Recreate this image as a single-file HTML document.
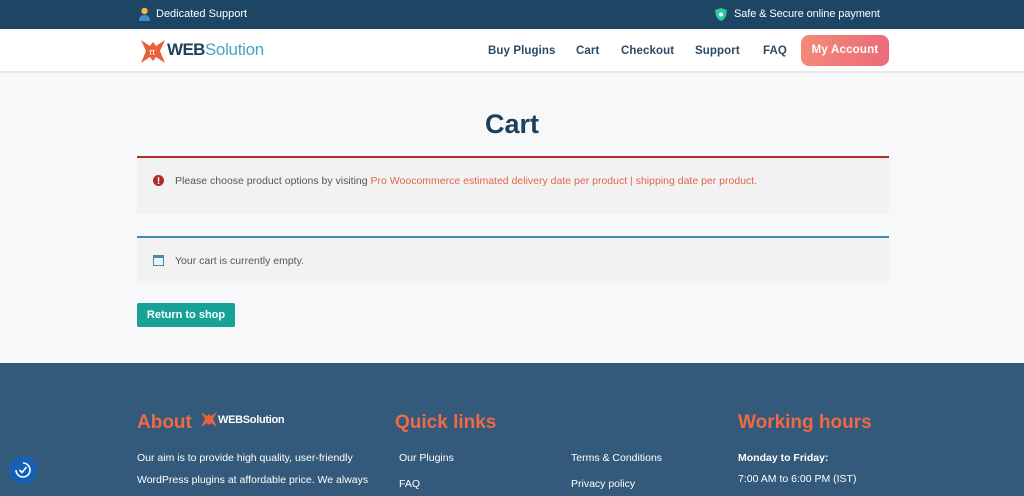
<!DOCTYPE html>
<html><head><meta charset="utf-8"><style>
*{margin:0;padding:0;box-sizing:border-box}
body{width:1024px;height:496px;overflow:hidden;font-family:"Liberation Sans",sans-serif;background:#f7f8fa;position:relative}
.top{position:absolute;top:0;left:0;width:1024px;height:29px;background:#1d4564;color:#fff;font-size:11px}
.top span{position:absolute;top:8px}
.hdr{position:absolute;top:29px;left:0;width:1024px;height:44px;background:#fff;border-bottom:2px solid #e8e8e8}
.nav{position:absolute;top:16px;font-size:11.5px;font-weight:bold;color:#2b4a66;letter-spacing:.1px}
.btn{position:absolute;left:801px;top:6px;width:88px;height:31px;border-radius:8px;background:linear-gradient(90deg,#f38a76,#ec6b7b);color:#fff;font-size:11.5px;font-weight:bold;text-align:center;line-height:31px;letter-spacing:.2px}
h1{position:absolute;top:109px;left:0;width:1024px;text-align:center;font-size:27px;color:#1e3f5a}
.box{position:absolute;left:137px;width:752px;background:#f2f2f3;font-size:10.5px;color:#555}
.foot{position:absolute;top:363px;left:0;width:1024px;height:133px;background:#335a7a}
.fh{position:absolute;color:#ee6a45;font-weight:bold;font-size:19px}
.ft{position:absolute;color:#fff;font-size:10.5px}
</style></head><body>
<div class="top">
<svg style="position:absolute;left:138px;top:7px" width="13" height="15"><circle cx="6.5" cy="4" r="3.2" fill="#f3b64a"/><path d="M1 14 Q1 8 6.5 8 Q12 8 12 14Z" fill="#3a8fd0"/></svg>
<span style="left:156px">Dedicated Support</span>
<svg style="position:absolute;left:715px;top:8px" width="12" height="13"><path d="M6 0 L12 2 L11 8 Q9 12 6 13 Q3 12 1 8 L0 2Z" fill="#2ec7a0"/><circle cx="6" cy="6.5" r="2" fill="#fff"/></svg>
<span style="left:734px;letter-spacing:-.1px">Safe &amp; Secure online payment</span>
</div>
<div class="hdr">
<svg style="position:absolute;left:139px;top:9px" width="28" height="27"><path d="M2 2 L11 8 L14 4 L17 8 L26 2 L21 13 L26 25 L17 19 L14 23 L11 19 L2 25 L7 13Z" fill="#e8613c"/><text x="10" y="17" font-size="9" fill="#fff">π</text></svg>
<div style="position:absolute;left:167px;top:11px;font-size:17px;font-weight:bold;letter-spacing:-.6px"><span style="color:#1f3e59">WEB</span><span style="color:#44a6c6;font-weight:normal;letter-spacing:-.3px">Solution</span></div>
<div class="nav" style="left:488px">Buy Plugins</div>
<div class="nav" style="left:576px">Cart</div>
<div class="nav" style="left:621px">Checkout</div>
<div class="nav" style="left:695px">Support</div>
<div class="nav" style="left:763px">FAQ</div>
<div class="btn">My Account</div>
</div>
<h1>Cart</h1>
<div class="box" style="top:156px;height:58px;border-top:2px solid #b22a2a">
<svg style="position:absolute;left:16px;top:17px" width="11" height="11"><circle cx="5.5" cy="5.5" r="5.5" fill="#b22a2a"/><rect x="4.8" y="2.3" width="1.5" height="4.3" fill="#fff"/><rect x="4.8" y="7.5" width="1.5" height="1.5" fill="#fff"/></svg>
<div style="position:absolute;left:38px;top:17px">Please choose product options by visiting <span style="color:#e2664a">Pro Woocommerce estimated delivery date per product | shipping date per product.</span></div>
</div>
<div class="box" style="top:236px;height:45px;border-top:2px solid #3d8db5">
<svg style="position:absolute;left:16px;top:17px" width="11" height="11"><rect x=".5" y=".5" width="10" height="10" fill="none" stroke="#3d8db5"/><rect x="0" y="0" width="11" height="3" fill="#3d8db5"/></svg>
<div style="position:absolute;left:38px;top:17px">Your cart is currently empty.</div>
</div>
<div style="position:absolute;left:137px;top:303px;width:98px;height:24px;background:#17a197;border-radius:2px;color:#fff;font-size:11px;font-weight:bold;text-align:center;line-height:24px">Return to shop</div>
<div class="foot">
<div class="fh" style="left:137px;top:49px">About</div>
<svg style="position:absolute;left:200px;top:48px" width="18" height="17"><path d="M1 1 L7 5 L9 3 L11 5 L17 1 L13 8 L17 16 L11 12 L9 14 L7 12 L1 16 L5 8Z" fill="#e8613c"/></svg>
<div style="position:absolute;left:218px;top:51px;color:#fff;font-weight:bold;font-size:11px;letter-spacing:-.3px">WEBSolution</div>
<div class="ft" style="left:137px;top:89px">Our aim is to provide high quality, user-friendly</div>
<div class="ft" style="left:137px;top:111px">WordPress plugins at affordable price. We always</div>
<div class="fh" style="left:395px;top:49px">Quick links</div>
<div class="ft" style="left:399px;top:89px">Our Plugins</div>
<div class="ft" style="left:399px;top:115px">FAQ</div>
<div class="ft" style="left:571px;top:89px">Terms &amp; Conditions</div>
<div class="ft" style="left:571px;top:115px">Privacy policy</div>
<div class="fh" style="left:738px;top:49px">Working hours</div>
<div class="ft" style="left:738px;top:89px;font-weight:bold">Monday to Friday:</div>
<div class="ft" style="left:738px;top:110px">7:00 AM to 6:00 PM (IST)</div>
<div style="position:absolute;left:9px;top:93px;width:28px;height:28px;border-radius:50%;background:#1460b5"></div>
<svg style="position:absolute;left:14px;top:98px" width="18" height="18"><path d="M9 2 A7 7 0 1 1 2 9" fill="none" stroke="#fff" stroke-width="1.6"/><path d="M5.5 9 L8 11.5 L12.5 6" fill="none" stroke="#fff" stroke-width="1.6"/></svg>
</div>
</body></html>
